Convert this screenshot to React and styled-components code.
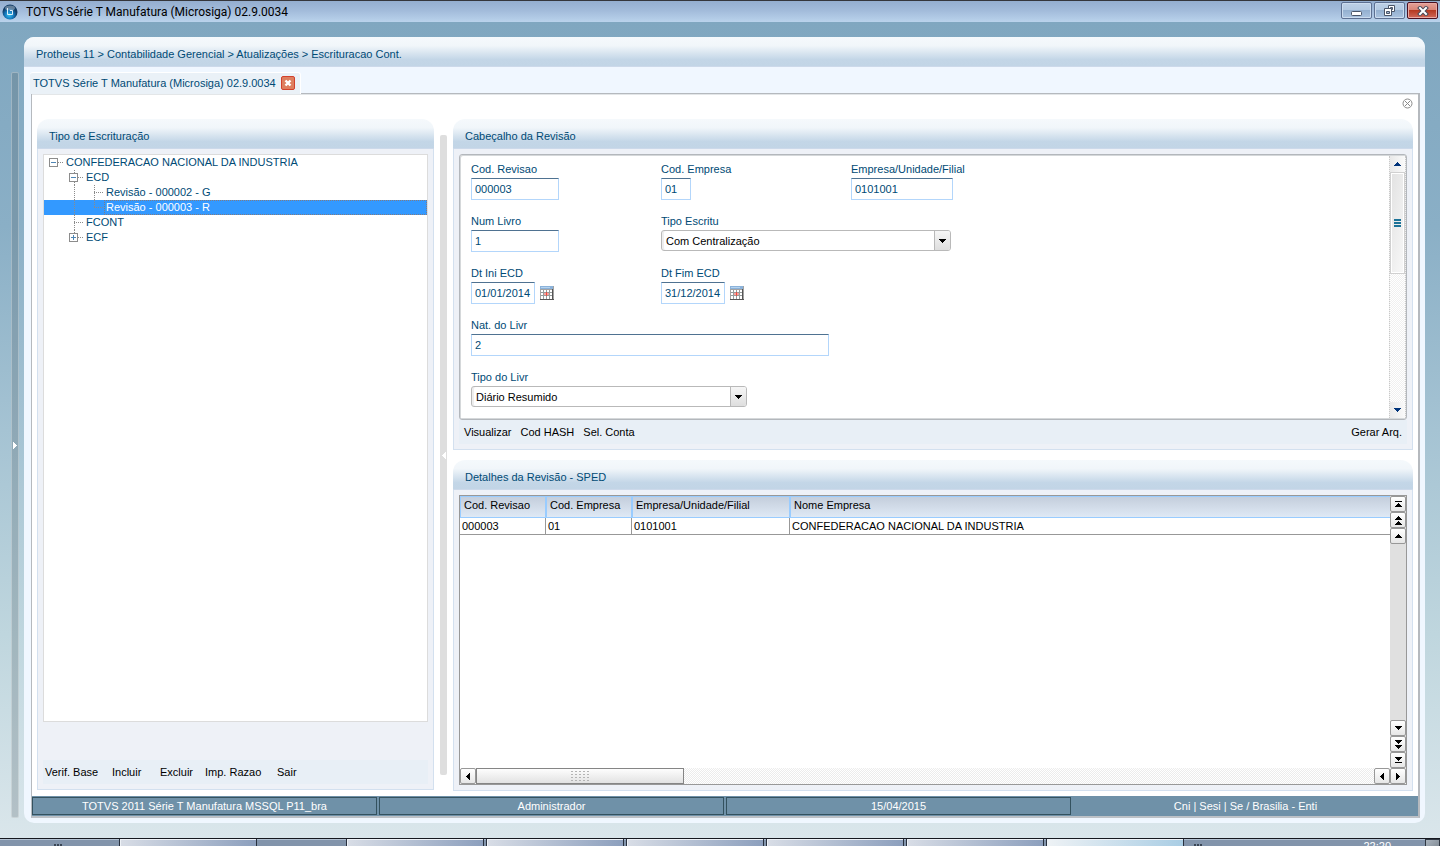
import React from "react";
import styled, { createGlobalStyle, css } from "styled-components";

const ink = "#004a75";

const Global = createGlobalStyle`
  * { box-sizing: border-box; }
  body { margin: 0; }
  body, button, input, select, table {
    font-family: "Liberation Sans", Arial, sans-serif;
    font-size: 11px;
    line-height: 14px;
    color: ${ink};
  }
  button { margin: 0; padding: 0; border: 0; background: none; cursor: pointer; }
  svg { display: block; }
`;

const Screen = styled.div`
  display: flex;
  flex-direction: column;
  min-height: 100vh;
  overflow: hidden;
`;

/* ---------- window frame ---------- */

const TitleBar = styled.header`
  display: flex;
  align-items: center;
  height: 22px;
  padding: 0 2px;
  border-top: 1px solid #35363b;
  background: linear-gradient(#94aecf, #a2bbda 45%, #bad3ec);
`;

const WindowTitle = styled.h1`
  flex: 1;
  margin: 0 0 0 8px;
  font: 400 12px/20px Roboto, "Open Sans", sans-serif;
  color: #000;
`;

const WindowButtons = styled.div`
  display: flex;
  align-self: flex-start;
  gap: 2px;
  padding-top: 1px;
`;

const WindowButton = styled.button`
  display: grid;
  place-items: center;
  width: 31px;
  height: 17px;
  border: 1px solid ${(p) => (p.$danger ? "#4b1020" : "#5d7092")};
  border-radius: 2px;
  box-shadow: inset 0 0 0 1px ${(p) => (p.$danger ? "#e9aaa4" : "#cbdcef")};
  background: ${(p) =>
    p.$danger
      ? "linear-gradient(#e4a197, #d98578 45%, #b53a22 50%, #d0695a)"
      : "linear-gradient(#bdd0e6, #b3c9e2 45%, #94b0d0 50%, #abc4e0)"};
`;

const Desktop = styled.div`
  flex: 1;
  display: flex;
  gap: 5px;
  padding: 15px 15px 15px 11px;
  background: linear-gradient(#80a7c0, #8aafc6 25%, #a5c3d3 50%, #bfd6de 75%, #dae6eb);
`;

const Rail = styled.button`
  display: grid;
  place-items: center;
  width: 8px;
  margin: 35px 0 5px;
  border: 1px solid rgba(255, 255, 255, 0.3);
  border-radius: 2px;
  background: rgba(80, 95, 105, 0.27);
`;

const Shell = styled.main`
  flex: 1;
  min-width: 0;
  display: flex;
  flex-direction: column;
  padding: 0 5px 5px 7px;
  border-radius: 10px;
  overflow: hidden;
  background: #f0f7ff;
`;

const headBar = css`
  height: 30px;
  margin: 0;
  padding: 2px 12px 0;
  border-bottom: 1px solid #ccd9ea;
  background: linear-gradient(#f5f9fc, #f1f6fa 30%, #c3d6e7 78%, #c2d5e6);
  font-size: 11px;
  font-weight: 400;
  line-height: 30px;
  color: ${ink};
`;

const Breadcrumb = styled.nav`
  ${headBar}
  margin: 0 -5px 0 -7px;
`;

const TabStrip = styled.div`
  display: flex;
  align-items: flex-end;
  height: 26px;
  padding-top: 5px;
`;

const Tab = styled.div`
  position: relative;
  display: flex;
  align-items: center;
  gap: 5px;
  height: 22px;
  margin: 0 0 -1px -1px;
  padding: 0 5px 2px 3px;
  border-top: 1px solid #fff;
  border-right: 1px solid #fff;
  border-radius: 3px 3px 0 0;
  background: #eaf1f7;
`;

const TabClose = styled.button`
  display: grid;
  place-items: center;
  width: 14px;
  height: 14px;
  border: 1px solid #d2412c;
  border-radius: 2px;
  background: #de7f5f;
`;

const Workspace = styled.section`
  flex: 1;
  display: flex;
  flex-direction: column;
  border: 1px solid #b5b9be;
  border-right-width: 2px;
  border-bottom: 2px solid #bdc1c6;
  background: #fff;
`;

const CloseRow = styled.div`
  display: flex;
  justify-content: flex-end;
  align-items: flex-start;
  height: 25px;
  padding: 4px 5px 0 0;
  box-shadow: inset 0 1px #e3e6e8;
`;

const Columns = styled.div`
  flex: 1;
  display: flex;
  gap: 6px;
  padding: 0 5px 5px;
`;

const SideColumn = styled.div`
  display: flex;
  width: 397px;
  padding-bottom: 1px;
`;

const Splitter = styled.button`
  display: grid;
  place-items: center;
  width: 7px;
  margin: 16px 0;
  border-radius: 2px;
  background: #dedede;
`;

const MainColumn = styled.div`
  flex: 1;
  min-width: 0;
  display: flex;
  flex-direction: column;
  gap: 10px;
`;

/* ---------- panels ---------- */

const PanelBox = styled.section`
  display: flex;
  flex-direction: column;
  flex: ${(p) => (p.$grow ? 1 : "none")};
`;

const PanelHead = styled.h2`
  ${headBar}
  border-radius: 12px 12px 0 0;
`;

const PanelBody = styled.div`
  flex: 1;
  display: flex;
  flex-direction: column;
  padding: 5px;
  border: 1px solid #d3e0ef;
  border-top: 0;
  background: #eef1f7;
`;

function Panel({ title, grow, children }) {
  return (
    <PanelBox $grow={grow}>
      <PanelHead>{title}</PanelHead>
      <PanelBody>{children}</PanelBody>
    </PanelBox>
  );
}

const Actions = styled.div`
  display: flex;
  align-items: center;
  gap: 9px;
  height: 24px;
  padding: 0 5px;
  background: #e8eff6;
`;

const SideActions = styled(Actions)`
  display: grid;
  grid-template-columns: 67px 48px 45px 72px auto;
  gap: 0;
  margin-top: 38px;
  padding: 0 2px;
`;

const ActionButton = styled.button`
  color: #000;
  text-align: left;
  white-space: nowrap;
`;

const Spacer = styled.span`
  flex: 1;
`;

/* ---------- tree ---------- */

const Tree = styled.ul`
  flex: 1;
  margin: 0;
  padding: 0;
  list-style: none;
  border: 1px solid #dcdcdc;
  background: #fff;
`;

const TreeRow = styled.li`
  display: flex;
  height: 15px;
  padding-left: 2px;
  background: ${(p) => (p.$selected ? "#3399ff" : "transparent")};
`;

const TreeLabel = styled.span`
  flex: 1;
  margin-left: -2px;
  padding-left: 2px;
  line-height: 15px;
  color: ${(p) => (p.$selected ? "#fff" : ink)};
  outline: ${(p) => (p.$selected ? "1px dotted rgba(185, 104, 44, 0.6)" : "none")};
  outline-offset: -1px;
`;

const nodes = [
  { label: "CONFEDERACAO NACIONAL DA INDUSTRIA", level: 0, box: "minus" },
  { label: "ECD", level: 1, box: "minus", trunk: 15 },
  { label: "Revisão - 000002 - G", level: 2, outer: true, trunk: 15 },
  { label: "Revisão - 000003 - R", level: 2, outer: true, trunk: 8, selected: true },
  { label: "FCONT", level: 1, trunk: 15 },
  { label: "ECF", level: 1, box: "plus", trunk: 8 },
];

function Guides({ level, box, trunk, outer }) {
  const x = level * 20 + 8;
  const dots = { stroke: "#8b8b8b", strokeDasharray: "1 1", fill: "none" };
  return (
    <svg width={(level + 1) * 20} height="15" shapeRendering="crispEdges" aria-hidden="true">
      {outer && <path d="M28.5 0V15" {...dots} />}
      {trunk && <path d={`M${x + 0.5} 0V${trunk}`} {...dots} />}
      <path d={`M${x} 7.5H${x + 9}`} {...dots} />
      {box && (
        <g>
          <rect x={x - 4.5} y="3.5" width="8" height="8" fill="#fff" stroke="#8c8c8c" />
          <path d={`M${x - 3} 7.5h5`} stroke="#4f86b5" />
          {box === "plus" && <path d={`M${x - 0.5} 5v5`} stroke="#4f86b5" />}
        </g>
      )}
    </svg>
  );
}

/* ---------- form ---------- */

const FormFrame = styled.div`
  display: flex;
  border: 1px solid #b3b7bc;
  border-radius: 3px;
  box-shadow: inset 1px 1px #d5d8da, inset -1px -1px #d5d8da;
  background: #fff;
  padding: 1px 0 1px 1px;
`;

const Form = styled.form`
  flex: 1;
  display: flex;
  flex-direction: column;
  gap: 14px;
  padding: 6px 10px 11px;
`;

const FormRow = styled.div`
  display: grid;
  grid-template-columns: 190px 190px 1fr;
`;

const Field = styled.div`
  grid-column: span ${(p) => p.$span || 1};
  display: flex;
  flex-direction: column;
  align-items: flex-start;
  gap: 2px;
`;

const FieldLine = styled.div`
  display: flex;
  align-items: center;
  gap: 5px;
`;

const TextBox = styled.input`
  width: ${(p) => p.$w}px;
  height: 22px;
  padding: 0 0 0 3px;
  border: 1px solid #b3d6fb;
  border-top-color: #4f7291;
  background: #fff;
`;

const SelectWrap = styled.div`
  position: relative;
  width: ${(p) => p.$w}px;
`;

const SelectBox = styled.select`
  display: block;
  width: 100%;
  height: 21px;
  padding: 0 20px 0 4px;
  appearance: none;
  border: 1px solid #b9b9b9;
  border-radius: 3px;
  box-shadow: inset 2px 0 #eee;
  background: #fff;
  color: #000;
`;

const SelectArrow = styled.span`
  position: absolute;
  top: 1px;
  right: 1px;
  bottom: 1px;
  display: grid;
  place-items: center;
  width: 16px;
  border-left: 1px solid #b9b9b9;
  border-radius: 0 2px 2px 0;
  background: linear-gradient(#f6f6f6, #dedede);
  pointer-events: none;
`;

const Arrow = ({ d, w = 7, h = 4, fill = "#000" }) => (
  <svg width={w} height={h} shapeRendering="crispEdges" aria-hidden="true">
    <path d={d} fill={fill} />
  </svg>
);
const up = "M3 0h1v1h1v1h1v1h1v1H0V3h1V2h1V1h1z";
const down = "M0 0h7v1H6v1H5v1H4v1H3V3H2V2H1V1H0z";

function TextField({ id, label, value, w, date }) {
  return (
    <Field>
      <label htmlFor={id}>{label}</label>
      <FieldLine>
        <TextBox id={id} defaultValue={value} $w={w} />
        {date && (
          <button type="button" aria-label={`Calendário: ${label}`}>
            <CalendarIcon />
          </button>
        )}
      </FieldLine>
    </Field>
  );
}

function SelectField({ id, label, value, w, span }) {
  return (
    <Field $span={span}>
      <label htmlFor={id}>{label}</label>
      <SelectWrap $w={w}>
        <SelectBox id={id} defaultValue={value}>
          <option>{value}</option>
        </SelectBox>
        <SelectArrow>
          <Arrow d={down} />
        </SelectArrow>
      </SelectWrap>
    </Field>
  );
}

function CalendarIcon() {
  return (
    <svg width="14" height="14" shapeRendering="crispEdges" aria-hidden="true">
      <rect width="14" height="14" fill="#a3a3a3" />
      <rect x="1" y="4" width="11" height="9" fill="#fff" />
      <rect width="13" height="3" fill="#8bb2da" />
      <rect x="1" y="1" width="9" height="1" fill="#b5d3ef" />
      <path d="M3.5 4v9M6.5 4v9M9.5 4v9M1 6.5h12M1 9.5h12" stroke="#959c9c" />
      <path d="M12.5 3v11M0 13.5h14" stroke="#555" />
      <rect x="4" y="7" width="2" height="2" fill="#f8a09a" />
      <rect x="7" y="7" width="2" height="2" fill="#f8a09a" />
      <rect x="6" y="6" width="1" height="4" fill="#ee4a42" />
    </svg>
  );
}

const FormScroll = styled.div`
  display: flex;
  flex-direction: column;
  width: 17px;
  border-left: 1px dotted #c8c8c8;
  border-right: 1px dotted #c8c8c8;
  background: repeating-conic-gradient(#f0f0f0 0 25%, #fff 0 50%) 0 0 / 2px 2px;
`;

const FormScrollButton = styled.button`
  display: grid;
  place-items: center;
  height: 16px;
  background: linear-gradient(90deg, #e9e9e9, #fafafa);
`;

const FormThumb = styled.div`
  display: grid;
  place-items: center;
  height: 102px;
  border: 1px solid #d0d0d0;
  box-shadow: inset 0 0 0 1px #fff;
  background: linear-gradient(100deg, #e2e2e2, #f8f8f8);
`;

/* ---------- grid ---------- */

const GridFrame = styled.div`
  flex: 1;
  display: grid;
  grid-template: 1fr 16px / 1fr 16px;
  border: 1px solid #989898;
  background: #fff;
`;

const Table = styled.table`
  width: 100%;
  table-layout: fixed;
  border-collapse: separate;
  border-spacing: 0;
  align-self: start;
  color: #000;
`;

const Th = styled.th`
  width: ${(p) => (p.$w ? `${p.$w}px` : "auto")};
  height: 22px;
  padding: 0 3px 4px;
  border: 1px solid #99ccff;
  border-right-width: ${(p) => (p.$w ? "1px" : "0")};
  background: linear-gradient(#c4cedc, #dfe9f5);
  font-weight: 400;
  text-align: left;
`;

const Td = styled.td`
  height: 17px;
  padding: 0 2px 1px;
  border-bottom: 1px solid #989898;
  border-right: ${(p) => (p.$last ? "0" : "1px solid #989898")};
  white-space: nowrap;
`;

const VScroll = styled.div`
  display: flex;
  flex-direction: column;
  background: #e0e0e0;
`;

const HScroll = styled.div`
  grid-column: 1 / -1;
  display: flex;
  background: repeating-conic-gradient(#ececec 0 25%, #fff 0 50%) 0 0 / 2px 2px;
`;

const ScrollButton = styled.button`
  display: grid;
  place-items: center;
  place-content: center;
  row-gap: 1px;
  width: 16px;
  height: 16px;
  border: 1px solid #989898;
  border-radius: 2px;
  background: linear-gradient(#fff, #e6e6e6);
`;

const HThumb = styled.div`
  display: grid;
  place-items: center;
  width: 208px;
  border: 1px solid #858585;
  background: linear-gradient(#fdfdfd, #e2e2e2);
`;

/* ---------- status and task bars ---------- */

const StatusBar = styled.footer`
  display: flex;
  gap: 2px;
  height: 20px;
  padding: 1px 0;
  background: #6f91a8;
  color: #fff;
`;

const StatusCell = styled.span`
  flex: 1;
  border: 1px solid ${(p) => (p.$plain ? "transparent" : "#34525f")};
  line-height: 17px;
  text-align: center;
`;

const TaskBar = styled.footer`
  display: flex;
  align-items: flex-start;
  gap: 4px;
  height: 8px;
  overflow: hidden;
  border-top: 1px solid #15181f;
  box-shadow: inset 0 1px #b4c2d2;
  background: #8294ab;
`;

const TaskGap = styled.span`
  display: flex;
  justify-content: center;
  width: ${(p) => p.$w}px;
  padding-top: 5px;
`;

const Task = styled.button`
  width: 136px;
  height: 30px;
  outline: 1px solid #28303e;
  box-shadow: inset 1px 1px #eef2f7;
  background: ${(p) =>
    p.$active ? "linear-gradient(90deg, #eef2f5, #a9cde4)" : "linear-gradient(90deg, #d8dde6, #8c9fbd)"};
`;

const Clock = styled.time`
  padding-right: 30px;
  color: #fff;
`;

const ShowDesktop = styled.button`
  width: 15px;
  height: 30px;
  border: 1px solid #2f3742;
  background: linear-gradient(135deg, #a9b3bd, #59636d);
`;

const Grip = () => (
  <svg width="8" height="2" shapeRendering="crispEdges" aria-hidden="true">
    <path d="M0 0h2v2H0zM3 0h2v2H3zM6 0h2v2H6z" fill="#3a4655" />
  </svg>
);

const columns = [
  ["Cod. Revisao", 86],
  ["Cod. Empresa", 86],
  ["Empresa/Unidade/Filial", 158],
  ["Nome Empresa", 0],
];
const row = ["000003", "01", "0101001", "CONFEDERACAO NACIONAL DA INDUSTRIA"];

export default function App() {
  return (
    <Screen>
      <Global />
      <TitleBar>
        <svg width="16" height="16" aria-hidden="true">
          <defs>
            <radialGradient id="orb" cx="45%" cy="70%">
              <stop offset="0" stopColor="#35c0f0" />
              <stop offset="0.6" stopColor="#1474b8" />
              <stop offset="1" stopColor="#123c66" />
            </radialGradient>
          </defs>
          <circle cx="8" cy="8" r="7.5" fill="url(#orb)" />
          <ellipse cx="8" cy="4" rx="5" ry="2.5" fill="#fff" opacity="0.35" />
          <path d="M5.5 4v6.5h5V6.5H8" fill="none" stroke="#fff" opacity="0.85" />
        </svg>
        <WindowTitle>TOTVS Série T Manufatura (Microsiga) 02.9.0034</WindowTitle>
        <WindowButtons>
          <WindowButton aria-label="Minimizar">
            <svg width="12" height="15">
              <rect x="0.5" y="8.5" width="10" height="4" rx="1" fill="#fff" stroke="#4a5568" />
            </svg>
          </WindowButton>
          <WindowButton aria-label="Restaurar">
            <svg width="13" height="13">
              <path d="M5.5 1.5h6v6h-6z" fill="#fff" stroke="#4a5568" />
              <path d="M7.5 3.5h2v2h-2z" fill="#9db6d3" stroke="#4a5568" />
              <path d="M1.5 4.5h7v7h-7z" fill="#fff" stroke="#4a5568" />
              <path d="M3.5 7.5h3v2h-3z" fill="#9db6d3" stroke="#4a5568" />
            </svg>
          </WindowButton>
          <WindowButton $danger aria-label="Fechar">
            <svg width="12" height="10">
              <path d="M3 2l6 6M9 2l-6 6" stroke="#4a4a58" strokeWidth="4" strokeLinecap="square" />
              <path d="M3 2l6 6M9 2l-6 6" stroke="#fff" strokeWidth="2" strokeLinecap="square" />
            </svg>
          </WindowButton>
        </WindowButtons>
      </TitleBar>

      <Desktop>
        <Rail aria-label="Abrir menu">
          <Arrow w={4} h={7} fill="#fff" d="M0 0h1v1h1v1h1v1h1v1H3v1H2v1H1v1H0z" />
        </Rail>
        <Shell>
          <Breadcrumb>Protheus 11 &gt; Contabilidade Gerencial &gt; Atualizações &gt; Escrituracao Cont.</Breadcrumb>
          <TabStrip>
            <Tab>
              TOTVS Série T Manufatura (Microsiga) 02.9.0034
              <TabClose aria-label="Fechar aba">
                <svg width="8" height="8">
                  <path d="M1.5 1.5l5 5M6.5 1.5l-5 5" stroke="#fff" strokeWidth="2.4" />
                </svg>
              </TabClose>
            </Tab>
          </TabStrip>
          <Workspace>
            <CloseRow>
              <button aria-label="Fechar rotina">
                <svg width="11" height="11">
                  <circle cx="5.5" cy="5.5" r="4.5" fill="#fff" stroke="#8a8a8a" />
                  <path d="M3 3l5 5M8 3l-5 5" stroke="#8a8a8a" />
                </svg>
              </button>
            </CloseRow>
            <Columns>
              <SideColumn>
                <Panel title="Tipo de Escrituração" grow>
                  <Tree>
                    {nodes.map((n) => (
                      <TreeRow key={n.label} $selected={n.selected}>
                        <Guides {...n} />
                        <TreeLabel $selected={n.selected}>{n.label}</TreeLabel>
                      </TreeRow>
                    ))}
                  </Tree>
                  <SideActions>
                    {["Verif. Base", "Incluir", "Excluir", "Imp. Razao", "Sair"].map((t) => (
                      <ActionButton key={t}>{t}</ActionButton>
                    ))}
                  </SideActions>
                </Panel>
              </SideColumn>
              <Splitter aria-label="Recolher painel">
                <Arrow w={4} h={7} fill="#fff" d="M4 0H3v1H2v1H1v1H0v1h1v1h1v1h1v1h1z" />
              </Splitter>
              <MainColumn>
                <Panel title="Cabeçalho da Revisão">
                  <FormFrame>
                    <Form>
                      <FormRow>
                        <TextField id="rev" label="Cod. Revisao" value="000003" w={88} />
                        <TextField id="emp" label="Cod. Empresa" value="01" w={30} />
                        <TextField id="fil" label="Empresa/Unidade/Filial" value="0101001" w={102} />
                      </FormRow>
                      <FormRow>
                        <TextField id="num" label="Num Livro" value="1" w={88} />
                        <SelectField id="esc" label="Tipo Escritu" value="Com Centralização" w={290} span={2} />
                      </FormRow>
                      <FormRow>
                        <TextField id="ini" label="Dt Ini ECD" value="01/01/2014" w={64} date />
                        <TextField id="fim" label="Dt Fim ECD" value="31/12/2014" w={64} date />
                      </FormRow>
                      <TextField id="nat" label="Nat. do Livr" value="2" w={358} />
                      <SelectField id="tip" label="Tipo do Livr" value="Diário Resumido" w={276} />
                    </Form>
                    <FormScroll>
                      <FormScrollButton type="button" aria-label="Rolar para cima">
                        <Arrow d={up} fill="#00337a" />
                      </FormScrollButton>
                      <FormThumb>
                        <svg width="7" height="9" shapeRendering="crispEdges" aria-hidden="true">
                          <path d="M0 1h7M0 4h7M0 7h7" stroke="#1d7398" strokeWidth="2" />
                        </svg>
                      </FormThumb>
                      <Spacer />
                      <FormScrollButton type="button" aria-label="Rolar para baixo">
                        <Arrow d={down} fill="#00337a" />
                      </FormScrollButton>
                    </FormScroll>
                  </FormFrame>
                  <Actions>
                    <ActionButton>Visualizar</ActionButton>
                    <ActionButton>Cod HASH</ActionButton>
                    <ActionButton>Sel. Conta</ActionButton>
                    <Spacer />
                    <ActionButton>Gerar Arq.</ActionButton>
                  </Actions>
                </Panel>
                <Panel title="Detalhes da Revisão - SPED" grow>
                  <GridFrame>
                    <Table>
                      <thead>
                        <tr>
                          {columns.map(([name, w]) => (
                            <Th key={name} $w={w}>{name}</Th>
                          ))}
                        </tr>
                      </thead>
                      <tbody>
                        <tr>
                          {row.map((v, i) => (
                            <Td key={v} $last={i === 3}>{v}</Td>
                          ))}
                        </tr>
                      </tbody>
                    </Table>
                    <VScroll>
                      <ScrollButton aria-label="Primeira linha">
                        <Arrow h={6} d={"M0 0h7v1H0zM3 2h1v1h1v1h1v1h1v1H0V5h1V4h1V3h1z"} />
                      </ScrollButton>
                      <ScrollButton aria-label="Página anterior">
                        <Arrow d={up} />
                        <Arrow d={up} />
                      </ScrollButton>
                      <ScrollButton aria-label="Linha anterior">
                        <Arrow d={up} />
                      </ScrollButton>
                      <Spacer />
                      <ScrollButton aria-label="Próxima linha">
                        <Arrow d={down} />
                      </ScrollButton>
                      <ScrollButton aria-label="Próxima página">
                        <Arrow d={down} />
                        <Arrow d={down} />
                      </ScrollButton>
                      <ScrollButton aria-label="Última linha">
                        <Arrow h={6} d={down + "M0 5h7v1H0z"} />
                      </ScrollButton>
                    </VScroll>
                    <HScroll>
                      <ScrollButton aria-label="Início">
                        <Arrow w={4} h={7} d="M4 0H3v1H2v1H1v1H0v1h1v1h1v1h1v1h1z" />
                      </ScrollButton>
                      <HThumb>
                        <svg width="19" height="10" shapeRendering="crispEdges" aria-hidden="true">
                          <path
                            d="M0 .5h19M0 3.5h19M0 6.5h19M0 9.5h19"
                            stroke="#b4b4b4"
                            strokeDasharray="2 2"
                          />
                        </svg>
                      </HThumb>
                      <Spacer />
                      <ScrollButton aria-label="Esquerda">
                        <Arrow w={4} h={7} d="M4 0H3v1H2v1H1v1H0v1h1v1h1v1h1v1h1z" />
                      </ScrollButton>
                      <ScrollButton aria-label="Direita">
                        <Arrow w={4} h={7} d="M0 0h1v1h1v1h1v1h1v1H3v1H2v1H1v1H0z" />
                      </ScrollButton>
                    </HScroll>
                  </GridFrame>
                </Panel>
              </MainColumn>
            </Columns>
            <StatusBar>
              <StatusCell>TOTVS 2011 Série T Manufatura MSSQL P11_bra</StatusCell>
              <StatusCell>Administrador</StatusCell>
              <StatusCell>15/04/2015</StatusCell>
              <StatusCell $plain>Cni | Sesi | Se / Brasilia - Enti</StatusCell>
            </StatusBar>
          </Workspace>
        </Shell>
      </Desktop>

      <TaskBar>
        <TaskGap $w={116}><Grip /></TaskGap>
        <Task aria-label="Janela 1" />
        <TaskGap $w={83} />
        <Task aria-label="Janela 2" />
        <Task aria-label="Janela 3" />
        <Task aria-label="Janela 4" />
        <Task aria-label="Janela 5" />
        <Task aria-label="Janela 6" />
        <Task $active aria-label="Janela 7" />
        <TaskGap $w={22}><Grip /></TaskGap>
        <Spacer />
        <Clock>22:20</Clock>
        <ShowDesktop aria-label="Mostrar área de trabalho" />
      </TaskBar>
    </Screen>
  );
}
